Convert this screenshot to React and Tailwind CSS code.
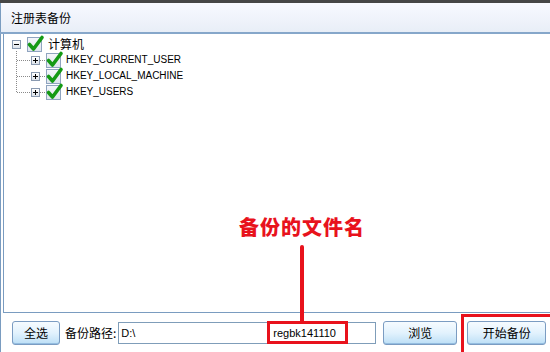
import React from "react";

const CJK = { fontFamily: '"Noto Sans CJK SC", "Liberation Sans", sans-serif' };
const LAT = { fontFamily: '"Liberation Sans", "Noto Sans CJK SC", sans-serif' };

function Check() {
  return (
    <div className="relative w-[15px] h-[15px] border border-[#8fa4bf] bg-gradient-to-b from-[#f4f6fa] to-[#dfe5ee] shrink-0">
      <svg className="absolute -left-[1px] -top-[3px] overflow-visible" width="18" height="18" viewBox="0 0 18 18">
        <path d="M2.5 9.5 L6.5 14 L15 2.5" fill="none" stroke="#159a15" strokeWidth="3.6" strokeLinecap="round" strokeLinejoin="round" />
      </svg>
    </div>
  );
}

function Expander({ plus }) {
  return (
    <div className="relative w-[9px] h-[9px] border border-[#8a9ab0] bg-gradient-to-b from-white to-[#dde3ea] shrink-0 flex items-center justify-center">
      <div className="absolute w-[5px] h-[1px] bg-black" />
      {plus && <div className="absolute w-[1px] h-[5px] bg-black" />}
    </div>
  );
}

function Btn({ children, className }) {
  return (
    <div
      className={
        "h-[24px] rounded-[3px] border border-[#7b9cc2] bg-gradient-to-b from-[#f6fbff] via-[#e2f2fd] to-[#bcdff6] shadow-[inset_0_-1px_0_#94bde0] flex items-center justify-center text-[12px] text-black " +
        className
      }
      style={CJK}
    >
      {children}
    </div>
  );
}

export default function App() {
  const children = ["HKEY_CURRENT_USER", "HKEY_LOCAL_MACHINE", "HKEY_USERS"];
  return (
    <div className="relative w-[550px] h-[352px] bg-white overflow-hidden">
      <div className="h-[3px] bg-[#464646]" />
      <div
        className="h-[29px] bg-gradient-to-b from-[#f8f9ff] to-[#e8eef7] border-l border-[#7a9cc0] pl-[10px] flex items-center text-[12px] text-black"
        style={CJK}
      >
        注册表备份
      </div>
      <div className="h-[2px] bg-[#86a7ca]" />
      <div className="h-[318px] border-l border-[#7a9cc0] flex flex-col">
        <div className="ml-[2px] h-[279px] border-l border-b border-[#7a9cc0] relative pt-[2px]">
          <svg className="absolute left-0 top-0" width="60" height="100">
            <line x1="12.5" y1="17" x2="12.5" y2="58" stroke="#8a8a8a" strokeDasharray="1 1" />
            {[0, 1, 2].map((i) => (
              <line key={i} x1="13" y1={26.5 + i * 16} x2="27" y2={26.5 + i * 16} stroke="#8a8a8a" strokeDasharray="1 1" />
            ))}
            {[0, 1, 2].map((i) => (
              <line key={"b" + i} x1="36" y1={26.5 + i * 16} x2="41" y2={26.5 + i * 16} stroke="#8a8a8a" strokeDasharray="1 1" />
            ))}
          </svg>
          <div className="relative h-[16px] flex items-center pl-[8px]">
            <Expander />
            <div className="ml-[6px]">
              <Check />
            </div>
            <span className="ml-[6px] text-[12px] text-black leading-none" style={CJK}>
              计算机
            </span>
          </div>
          {children.map((c) => (
            <div key={c} className="relative h-[16px] flex items-center pl-[27px]">
              <Expander plus />
              <div className="ml-[6px]">
                <Check />
              </div>
              <span className="ml-[5px] text-[10px] text-black leading-none" style={LAT}>
                {c}
              </span>
            </div>
          ))}
        </div>
        <div className="flex-1 flex items-center pl-[11px] pt-[1px]">
          <Btn className="w-[48px]">全选</Btn>
          <span className="ml-[5px] text-[12px] text-black" style={CJK}>
            备份路径:
          </span>
          <div className="ml-[2px] w-[258px] h-[22px] border border-[#7f9db9] bg-white flex items-center pl-[2px] text-[11px] text-black" style={LAT}>
            <span className="w-[152px]">D:\</span>
            <span>regbk141110</span>
          </div>
          <Btn className="ml-[7px] w-[74px]">浏览</Btn>
          <Btn className="ml-[10px] w-[79px]">开始备份</Btn>
        </div>
      </div>

      {/* annotations */}
      <div
        className="absolute left-[239px] top-[213px] text-[20px] font-black leading-[28px] text-[#e8121c] tracking-[1px]"
        style={CJK}
      >
        备份的文件名
      </div>
      <div className="absolute left-[300px] top-[245px] w-[4px] h-[77px] bg-[#e8121c] rounded-t-[2px]" />
      <div className="absolute left-[267px] top-[321px] w-[81px] h-[23px] border-[3px] border-[#e8121c]" />
      <div className="absolute left-[461px] top-[314px] w-[95px] h-[45px] border-[3px] border-[#e8121c]" />
    </div>
  );
}
